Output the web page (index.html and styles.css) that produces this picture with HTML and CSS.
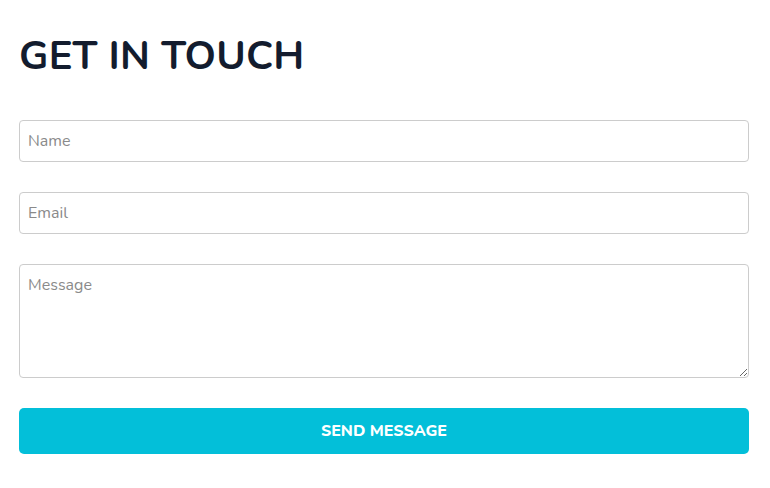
FILE: index.html
```html
<!DOCTYPE html>
<html>
<head>
<meta charset="utf-8">
<link rel="stylesheet" href="styles.css">
</head>
<body>
<div class="contact">
  <h1 class="title">GET IN TOUCH</h1>
  <form class="form">
    <input class="field" type="text" placeholder="Name">
    <input class="field" type="email" placeholder="Email">
    <textarea class="field area" placeholder="Message"></textarea>
    <button class="send" type="button">SEND MESSAGE</button>
  </form>
</div>
</body>
</html>
```

FILE: styles.css
```css
html, body {
  margin: 0;
  background: #fff;
}
.contact {
  padding: 31px 21px 0 19px;
  font-family: "Nunito", "Open Sans", sans-serif;
}
.title {
  margin: 0 0 39px;
  font-size: 40px;
  line-height: 50px;
  font-weight: 700;
  color: #131c2e;
  letter-spacing: 0.2px;
}
.form {
  display: flex;
  flex-direction: column;
  gap: 30px;
}
.field {
  box-sizing: border-box;
  width: 100%;
  height: 42px;
  margin: 0;
  padding: 0 8px;
  border: 1px solid #cccccc;
  border-radius: 4px;
  font-family: inherit;
  font-size: 16px;
  color: #333;
  background: #fff;
  outline: none;
}
.field::placeholder {
  color: #8a8a8a;
}
.area {
  height: 114px;
  padding-top: 9px;
  resize: vertical;
  display: block;
}
.send {
  height: 46px;
  border: 0;
  border-radius: 5px;
  background: #03bfd9;
  color: #fff;
  font-family: inherit;
  font-size: 16px;
  font-weight: 800;
  cursor: pointer;
}
```
